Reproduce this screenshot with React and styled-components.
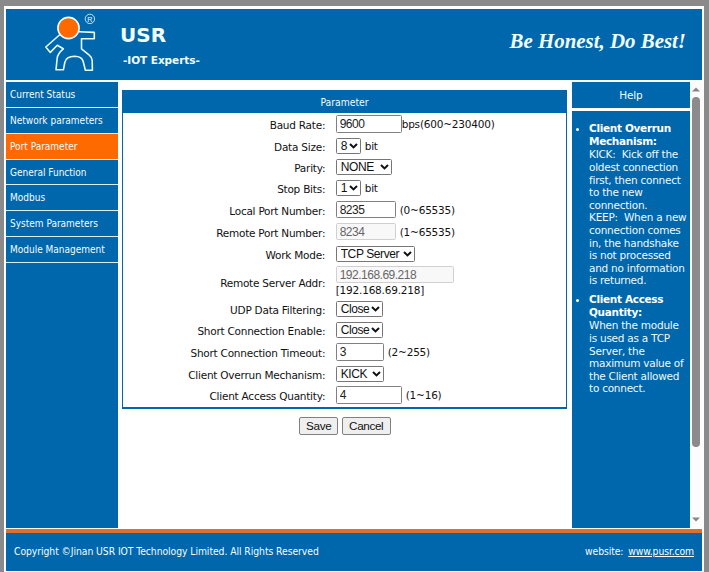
import React from "react";
import styled, { createGlobalStyle } from "styled-components";

const BLUE = "#0067ac";
const ORANGE = "#ff6a00";
const NARROW = `"DejaVu Sans Condensed", "DejaVu Sans", Verdana, sans-serif`;

const GlobalStyle = createGlobalStyle`
  * { box-sizing: border-box; }
  html, body { margin: 0; background: #8a8a8a; overflow: hidden; }
  body { font-family: "DejaVu Sans", Verdana, sans-serif; font-size: 10.5px; color: #111; }
`;

const Page = styled.div`
  width: 709px;
  height: 572px;
  padding: 6px 5px 0 4px;
  background: #8a8a8a;
`;
const Frame = styled.div`
  display: flex;
  flex-direction: column;
  height: 566px;
  padding: 2.6px 2px 1.5px 2px;
  background: #fcfeff;
`;
const Header = styled.header`
  display: flex;
  flex: none;
  height: 71.4px;
  background: ${BLUE};
  color: #f2fdff;
`;
const Logo = styled.svg`
  width: 56px;
  height: 64px;
  margin: 1.4px 0 0 36px;
`;
const Brand = styled.div`
  margin: 13px 0 0 22px;
  flex: 1;
  white-space: nowrap;
`;
const BrandName = styled.div`
  font: bold 20px/26px "DejaVu Sans", sans-serif;
`;
const BrandTag = styled.div`
  margin: 5px 0 0 3px;
  font: bold 10.5px/14px "DejaVu Sans", sans-serif;
  letter-spacing: -0.05px;
`;
const Slogan = styled.div`
  margin: 20px 16px 0 0;
  font: italic bold 20.9px/25px "Liberation Serif", serif;
  white-space: nowrap;
`;
const Body = styled.div`
  display: flex;
  height: 445.6px;
  margin-top: 2px;
  flex: none;
`;
const Sidebar = styled.nav`
  width: 112px;
  background: ${BLUE};
`;
const NavItem = styled.div`
  height: 25.88px;
  padding-left: 4px;
  border-bottom: 1px solid #d8eefa;
  background: ${(p) => (p.$active ? ORANGE : BLUE)};
  color: #f4fcff;
  font: 10px/25px ${NARROW};
  white-space: nowrap;
`;
const Main = styled.main`
  flex: 1;
  padding: 8px 4.7px 0 3.7px;
  background: #fff;
`;
const Panel = styled.section`
  height: 319px;
  border: 1.5px solid ${BLUE};
  border-top: 0;
  border-bottom-width: 2px;
`;
const PanelTitle = styled.div`
  height: 23px;
  background: ${BLUE};
  color: #f2fdff;
  font: 10.3px/25px ${NARROW};
  text-align: center;
`;
const Row = styled.div`
  display: grid;
  grid-template-columns: 202.5px 1fr;
  column-gap: 10.5px;
  align-items: center;
  height: ${(p) => p.$h}px;
`;
const Label = styled.label`
  padding-top: 2px;
  text-align: right;
  letter-spacing: -0.24px;
  line-height: 14px;
  white-space: nowrap;
`;
const Controls = styled.div`
  display: flex;
  flex-direction: ${(p) => (p.$stacked ? "column" : "row")};
  align-items: ${(p) => (p.$stacked ? "flex-start" : "center")};
  line-height: 14px;
`;
const Field = styled.input`
  width: ${(p) => p.$w}px;
  height: 17.5px;
  padding: 0 3px;
  border: 1px solid #808080;
  border-radius: 1.5px;
  background: #fff;
  color: #222;
  font: 12px "Liberation Sans", Arial, sans-serif;
  letter-spacing: -0.5px;
  &:disabled {
    border-color: #d0d0d0;
    background: #f8f8f8;
    color: #666;
  }
`;
const Hint = styled.span`
  margin-left: ${(p) => p.$gap}px;
  letter-spacing: -0.2px;
  white-space: nowrap;
`;
const SelectWrap = styled.span`
  display: flex;
  position: relative;
  width: ${(p) => p.$w}px;
  height: 16px;
`;
const NativeSelect = styled.select`
  appearance: none;
  width: 100%;
  height: 100%;
  padding: 0 0 0 4px;
  border: 1px solid #767676;
  border-radius: 1.5px;
  background: #fff;
  color: #111;
  font: 12px/14px "Liberation Sans", Arial, sans-serif;
  letter-spacing: -0.4px;
`;
const Chevron = styled.svg`
  position: absolute;
  right: 3px;
  top: 5px;
  width: 9px;
  height: 6px;
  pointer-events: none;
`;
const Actions = styled.div`
  display: flex;
  gap: 3.5px;
  margin: 8.5px 0 0 177.5px;
`;
const Button = styled.button`
  width: ${(p) => p.$w}px;
  height: 17.5px;
  padding: 0 0 1px;
  border: 1px solid #808080;
  border-radius: 2px;
  background: #efefef;
  color: #111;
  font: 11.7px/15px "Liberation Sans", Arial, sans-serif;
  letter-spacing: -0.35px;
`;
const HelpColumn = styled.aside`
  display: flex;
  flex-direction: column;
  gap: 3.4px;
  width: 117.6px;
`;
const HelpTitle = styled.div`
  height: 25.6px;
  background: ${BLUE};
  color: #f2fdff;
  line-height: 26px;
  text-align: center;
  letter-spacing: -0.2px;
`;
const HelpBody = styled.div`
  flex: 1;
  padding-top: 11px;
  background: ${BLUE};
  color: #ecf9ff;
`;
const HelpItem = styled.div`
  display: grid;
  grid-template-columns: 17px 1fr;
  margin-bottom: 6px;
  white-space: pre;
  line-height: 12.6px;
  letter-spacing: -0.25px;
`;
const Bullet = styled.span`
  width: 3px;
  height: 3px;
  margin: 6px 0 0 4px;
  border-radius: 50%;
  background: #fff;
`;
const HelpHeading = styled.div`
  color: #fff;
  font-weight: bold;
  line-height: 13.2px;
  letter-spacing: -0.32px;
`;
const ScrollBar = styled.div`
  display: flex;
  flex-direction: column;
  align-items: center;
  width: 12.4px;
  padding: 5px 0 6px;
  background: #fcfcfc;
`;
const Arrow = styled.svg`
  width: 8px;
  height: 5px;
`;
const Thumb = styled.div`
  width: 8px;
  height: 350px;
  margin: 5px 0 auto;
  border-radius: 4px;
  background: #8b8b8b;
`;
const Footer = styled.footer`
  display: flex;
  flex: 1;
  justify-content: space-between;
  margin-top: 1.4px;
  padding: 0 8px;
  border-top: 4px solid #db7030;
  background: ${BLUE};
  color: #f4fcff;
  font: 10.3px/37px ${NARROW};
  letter-spacing: -0.06px;
  white-space: nowrap;
`;
const Website = styled.span`
  display: flex;
  gap: 5px;
  letter-spacing: -0.1px;
`;
const SiteLink = styled.a`
  color: #fff;
  text-decoration: underline;
`;

const Select = ({ w, value }) => (
  <SelectWrap $w={w}>
    <NativeSelect defaultValue={value}>
      <option>{value}</option>
    </NativeSelect>
    <Chevron viewBox="0 0 9 6">
      <path d="M1 1 4.5 4.4 8 1" fill="none" stroke="#111" strokeWidth="2" />
    </Chevron>
  </SelectWrap>
);

const nav = [
  "Current Status",
  "Network parameters",
  "Port Parameter",
  "General Function",
  "Modbus",
  "System Parameters",
  "Module Management",
];

const rows = [
  { h: 22.5, label: "Baud Rate:", w: 66, value: "9600", hint: "bps(600~230400)", gap: 0 },
  { h: 21.5, label: "Data Size:", select: true, w: 25, value: "8", hint: "bit", gap: 4 },
  { h: 20.5, label: "Parity:", select: true, w: 56, value: "NONE" },
  { h: 21.5, label: "Stop Bits:", select: true, w: 25, value: "1", hint: "bit", gap: 4 },
  { h: 21.5, label: "Local Port Number:", w: 60, value: "8235", hint: "(0~65535)", gap: 4 },
  { h: 22.5, label: "Remote Port Number:", w: 60, value: "8234", hint: "(1~65535)", gap: 4, disabled: true },
  { h: 21.5, label: "Work Mode:", select: true, w: 79, value: "TCP Server" },
  { h: 34.5, label: "Remote Server Addr:", w: 118.5, value: "192.168.69.218", hint: "[192.168.69.218]", gap: 0, disabled: true, stacked: true },
  { h: 21, label: "UDP Data Filtering:", select: true, w: 47, value: "Close" },
  { h: 21, label: "Short Connection Enable:", select: true, w: 47, value: "Close" },
  { h: 21.8, label: "Short Connection Timeout:", w: 48, value: "3", hint: "(2~255)", gap: 4 },
  { h: 21.5, label: "Client Overrun Mechanism:", select: true, w: 48, value: "KICK" },
  { h: 21.7, label: "Client Access Quantity:", w: 66, value: "4", hint: "(1~16)", gap: 4 },
];

const help = [
  {
    title: "Client Overrun\nMechanism:",
    text: "KICK:  Kick off the\noldest connection\nfirst, then connect\nto the new\nconnection.\nKEEP:  When a new\nconnection comes\nin, the handshake\nis not processed\nand no information\nis returned.",
  },
  {
    title: "Client Access\nQuantity:",
    text: "When the module\nis used as a TCP\nServer, the\nmaximum value of\nthe Client allowed\nto connect.",
  },
];

export default function App() {
  return (
    <>
      <GlobalStyle />
      <Page>
        <Frame>
          <Header>
            <Logo viewBox="42 10 56 64">
              <path
                d="M60 34.5 45.8 47 50.3 52.4 57.3 45.2 63.3 48.8 Q57.8 53.5 57.2 58 L56 69.8 63.4 69.8 64.8 62.5 Q66 56.4 74.5 56.2 Q82 56.3 83.2 61.5 L85.4 70.2 92.4 70.2 92.2 60.5 Q91.8 57 89 54.8 L81.5 48.8 81.5 38.7 94.3 38.7 94.3 32.4 79 31.8"
                fill="none"
                stroke="#e6faff"
                strokeWidth="1.6"
                strokeLinejoin="round"
              />
              <circle cx="68.5" cy="28" r="10.6" fill={ORANGE} stroke="#f2fdff" strokeWidth="1.6" />
              <circle cx="89.9" cy="18.9" r="4.7" fill="none" stroke="#d5effa" strokeWidth="0.9" />
              <text x="89.9" y="21.5" textAnchor="middle" fontFamily="Liberation Sans, sans-serif" fontSize="7.2" fill="#e6faff">R</text>
            </Logo>
            <Brand>
              <BrandName>USR</BrandName>
              <BrandTag>-IOT Experts-</BrandTag>
            </Brand>
            <Slogan>Be Honest, Do Best!</Slogan>
          </Header>
          <Body>
            <Sidebar>
              {nav.map((name) => (
                <NavItem key={name} $active={name === "Port Parameter"}>
                  {name}
                </NavItem>
              ))}
            </Sidebar>
            <Main>
              <Panel>
                <PanelTitle>Parameter</PanelTitle>
                {rows.map((r) => (
                  <Row key={r.label} $h={r.h}>
                    <Label>{r.label}</Label>
                    <Controls $stacked={r.stacked}>
                      {r.select ? (
                        <Select w={r.w} value={r.value} />
                      ) : (
                        <Field $w={r.w} defaultValue={r.value} disabled={r.disabled} />
                      )}
                      {r.hint && <Hint $gap={r.gap}>{r.hint}</Hint>}
                    </Controls>
                  </Row>
                ))}
              </Panel>
              <Actions>
                <Button $w={39}>Save</Button>
                <Button $w={49}>Cancel</Button>
              </Actions>
            </Main>
            <HelpColumn>
              <HelpTitle>Help</HelpTitle>
              <HelpBody>
                {help.map((item) => (
                  <HelpItem key={item.title}>
                    <Bullet />
                    <div>
                      <HelpHeading>{item.title}</HelpHeading>
                      {item.text}
                    </div>
                  </HelpItem>
                ))}
              </HelpBody>
            </HelpColumn>
            <ScrollBar>
              <Arrow viewBox="0 0 8 5"><path d="M0 4.5 4 0.5 8 4.5Z" fill="#858585" /></Arrow>
              <Thumb />
              <Arrow viewBox="0 0 8 5"><path d="M0 0.5 4 4.5 8 0.5Z" fill="#858585" /></Arrow>
            </ScrollBar>
          </Body>
          <Footer>
            <span>Copyright ©Jinan USR IOT Technology Limited. All Rights Reserved</span>
            <Website>
              website:
              <SiteLink>www.pusr.com</SiteLink>
            </Website>
          </Footer>
        </Frame>
      </Page>
    </>
  );
}
